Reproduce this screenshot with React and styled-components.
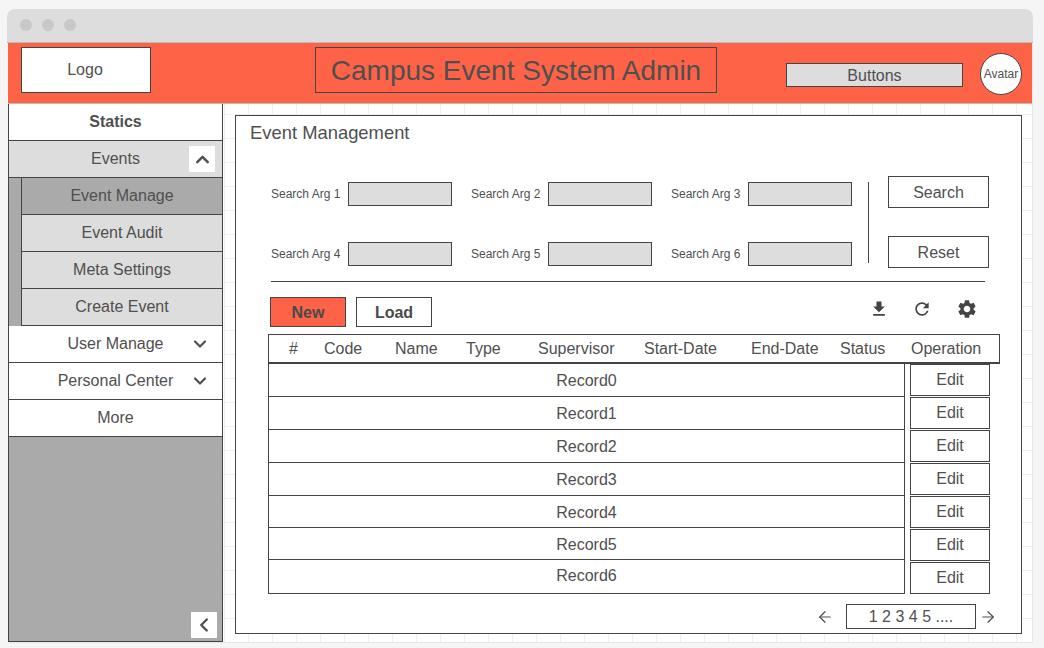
import React from 'react';
import styled, { createGlobalStyle } from 'styled-components';
import { ChevronUp, ChevronDown, ChevronLeft, ArrowLeft, ArrowRight } from 'lucide-react';
import { MdFileDownload, MdRefresh, MdSettings } from 'react-icons/md';

const Global = createGlobalStyle`
  html, body { margin: 0; padding: 0; background: #f5f5f5; }
  body { font-family: "Liberation Sans", Arial, sans-serif; color: #4f4f4f; }
  * { box-sizing: border-box; }
`;
const Page = styled.div`
  width: 1044px; height: 648px; padding: 9px 11px 5px 7px; overflow: hidden;
`;
const Win = styled.div`
  width: 1026px; height: 634px; display: flex; flex-direction: column;
  border-radius: 8px 8px 0 0; overflow: hidden; background: #f5f5f5;
`;
const TitleBar = styled.div`
  height: 34px; flex: none; background: #ddd; display: flex; align-items: center;
  gap: 10px; padding: 0 0 2px 13px; border-bottom: 1px solid #bbb;
`;
const Dot = styled.span`
  width: 12px; height: 12px; border-radius: 50%; background: #c8c8c8;
`;
const Canvas = styled.div`
  flex: 1; display: flex; flex-direction: column; margin: 0 0 0 1px; min-height: 0;
  background-color: #fff;
  background-image: linear-gradient(#eee 1px, transparent 1px), linear-gradient(90deg, #eee 1px, transparent 1px);
  background-size: 24px 24px;
  background-position: 0 -1px;
  border-right: 1px solid #e6e6e6;
  border-bottom: 1px solid #e6e6e6;
`;
const Header = styled.header`
  height: 61px; flex: none; background: #ff6347; border-bottom: 1px solid #bbb;
  display: flex; align-items: flex-start; padding-left: 13px; width: 1024px;
`;
const Logo = styled.div`
  width: 130px; height: 46px; margin-top: 4px; background: #fff; border: 1px solid #444;
  display: flex; align-items: center; justify-content: center; font-size: 16px; padding-right: 2px;
`;
const AppTitle = styled.h1`
  width: 402px; height: 46px; margin: 4px 0 0 164px; border: 1px solid #444; font-weight: 400;
  font-size: 28px; display: flex; align-items: center; justify-content: center; color: #4f4f4f; padding-top: 2px;
`;
const HeaderButtons = styled.div`
  width: 177px; height: 24px; margin: 20px 0 0 69px; background: #ddd; border: 1px solid #444;
  display: flex; align-items: center; justify-content: center; font-size: 16px; padding-top: 1px;
`;
const Avatar = styled.div`
  width: 42px; height: 42px; margin: 10px 0 0 17px; border-radius: 50%; background: #fff; border: 1px solid #444;
  display: flex; align-items: center; justify-content: center; font-size: 12px;
`;
const Body = styled.div`
  flex: 1; display: flex; min-height: 0;
`;
const Side = styled.aside`
  width: 215px; flex: none; background: #aaa; border: 1px solid #444; border-top: 0;
  display: flex; flex-direction: column; position: relative;
`;
const NavRow = styled.div`
  height: 37px; flex: none; position: relative; display: flex; align-items: center; justify-content: center;
  font-size: 16px; border-bottom: 1px solid #444;
  background: ${p => (p.$shade ? '#ddd' : '#fff')};
  font-weight: ${p => (p.$bold ? 700 : 400)};
`;
const ToggleBox = styled.span`
  position: absolute; right: 7px; top: 5px; width: 26px; height: 26px; background: #fff;
  display: flex; align-items: center; justify-content: center;
`;
const ChevronSlot = styled.span`
  position: absolute; right: 12px; top: 8px; display: flex;
`;
const SubNav = styled.div`
  padding-left: 12px; background: #aaa; display: flex; flex-direction: column;
`;
const SubRow = styled.div`
  height: 37px; display: flex; align-items: center; justify-content: center; font-size: 16px;
  border-left: 1px solid #444; border-bottom: 1px solid #444;
  background: ${p => (p.$active ? '#aaa' : '#ddd')};
`;
const Collapse = styled.span`
  position: absolute; right: 5px; bottom: 3px; width: 26px; height: 26px; background: #fff;
  display: flex; align-items: center; justify-content: center;
`;
const Main = styled.main`
  flex: 1; padding: 11px 10px 7px 12px; min-width: 0;
`;
const Card = styled.section`
  width: 787px; height: 519px; background: #fff; border: 1px solid #444; padding: 7px 0 0 14px;
`;
const CardTitle = styled.h2`
  margin: 0; font-size: 18.4px; font-weight: 400; line-height: 20px; color: #4f4f4f;
`;
const SearchArea = styled.div`
  display: flex; margin: 33px 0 0 21px; height: 92px;
`;
const ArgGrid = styled.div`
  display: grid; grid-template-columns: repeat(3, 181px); grid-auto-rows: 24px; row-gap: 36px; margin-top: 6px;
  column-gap: 19px; width: 581px;
`;
const Arg = styled.label`
  display: flex; align-items: center; justify-content: space-between; font-size: 12px; white-space: nowrap;
`;
const ArgInput = styled.span`
  width: 104px; height: 24px; background: #ddd; border: 1px solid #444; display: block;
`;
const VDivider = styled.div`
  width: 1px; height: 81px; margin: 6px 0 0 16px; background: #444;
`;
const SearchButtons = styled.div`
  display: flex; flex-direction: column; gap: 28px; margin-left: 19px;
`;
const OutlineBtn = styled.button`
  width: 101px; height: 32px; background: #fff; border: 1px solid #444; color: #4f4f4f; font: 16px "Liberation Sans", Arial, sans-serif; padding: 2px 0 0;
`;
const HLine = styled.div`
  width: 714px; height: 1px; background: #444; margin: 13px 0 0 21px;
`;
const Toolbar = styled.div`
  display: flex; align-items: center; gap: 10px; margin: 15px 0 0 20px; height: 30px; width: 708px;
`;
const ActionBtn = styled.button`
  width: 76px; height: 30px; border: 1px solid #444; color: #4a4a4a; font: 700 16px "Liberation Sans", Arial, sans-serif; padding: 1px 0 0;
  background: ${p => (p.$primary ? '#ff6347' : '#fff')};
`;
const ToolIcons = styled.div`
  margin-left: auto; display: flex; align-items: center; gap: 23px; color: #444; margin-top: -6px;
  svg:last-child { margin-left: 1px; }
`;
const TableHead = styled.div`
  display: grid; grid-template-columns: 35px 71px 71px 72px 106px 107px 89px 71px 1fr;
  width: 732px; height: 30px; margin: 7px 0 0 18px; border: 1px solid #444; border-bottom: 2px solid #444;
  align-items: center; font-size: 16px; padding-left: 20px; white-space: nowrap;
`;
const TableBody = styled.div`
  display: flex; gap: 5px; margin-left: 18px;
`;
const Records = styled.div`
  width: 637px; height: 230px; border: 1px solid #444; border-top: 0;
`;
const Record = styled.div`
  height: ${p => p.$h}px; display: flex; align-items: center; justify-content: center; font-size: 16px;
  border-bottom: 1px solid #444; padding-top: 2px;
  &:last-child { border-bottom: 0; padding: 0 0 1px; }
`;
const Edits = styled.div`
  display: flex; flex-direction: column;
`;
const EditBtn = styled.button`
  width: 80px; height: 32px; margin-bottom: 1px; background: #fff; border: 1px solid #444; color: #4f4f4f; font: 16px "Liberation Sans", Arial, sans-serif; padding: 0;
`;
const Pager = styled.div`
  display: flex; align-items: center; justify-content: flex-end; margin-top: 9px; width: 747px; height: 25px;
`;
const PageBox = styled.div`
  width: 130px; height: 25px; margin: 0 3px 0 12px; border: 1px solid #444; font-size: 16px;
  display: flex; align-items: center; justify-content: center;
`;

const subItems = ['Event Audit', 'Meta Settings', 'Create Event'];
const cols = ['#', 'Code', 'Name', 'Type', 'Supervisor', 'Start-Date', 'End-Date', 'Status', 'Operation'];
const heights = [33, 33, 33, 33, 32, 32, 33];

export default function App() {
  return (
    <Page>
      <Global />
      <Win>
        <TitleBar><Dot /><Dot /><Dot /></TitleBar>
        <Canvas>
          <Header>
            <Logo>Logo</Logo>
            <AppTitle>Campus Event System Admin</AppTitle>
            <HeaderButtons>Buttons</HeaderButtons>
            <Avatar>Avatar</Avatar>
          </Header>
          <Body>
            <Side>
              <NavRow $bold>Statics</NavRow>
              <NavRow $shade>Events<ToggleBox><ChevronUp size={21} strokeWidth={2.8} /></ToggleBox></NavRow>
              <SubNav>
                <SubRow $active>Event Manage</SubRow>
                {subItems.map(s => <SubRow key={s}>{s}</SubRow>)}
              </SubNav>
              <NavRow>User Manage<ChevronSlot><ChevronDown size={20} strokeWidth={2.6} /></ChevronSlot></NavRow>
              <NavRow>Personal Center<ChevronSlot><ChevronDown size={20} strokeWidth={2.6} /></ChevronSlot></NavRow>
              <NavRow>More</NavRow>
              <Collapse><ChevronLeft size={22} strokeWidth={2.6} /></Collapse>
            </Side>
            <Main>
              <Card>
                <CardTitle>Event Management</CardTitle>
                <SearchArea>
                  <ArgGrid>
                    {[1, 2, 3, 4, 5, 6].map(n => (
                      <Arg key={n}>Search Arg {n}<ArgInput /></Arg>
                    ))}
                  </ArgGrid>
                  <VDivider />
                  <SearchButtons>
                    <OutlineBtn>Search</OutlineBtn>
                    <OutlineBtn>Reset</OutlineBtn>
                  </SearchButtons>
                </SearchArea>
                <HLine />
                <Toolbar>
                  <ActionBtn $primary>New</ActionBtn>
                  <ActionBtn>Load</ActionBtn>
                  <ToolIcons>
                    <MdFileDownload size={20} />
                    <MdRefresh size={20} />
                    <MdSettings size={22} />
                  </ToolIcons>
                </Toolbar>
                <TableHead>{cols.map(c => <span key={c}>{c}</span>)}</TableHead>
                <TableBody>
                  <Records>
                    {heights.map((h, i) => <Record key={i} $h={h}>Record{i}</Record>)}
                  </Records>
                  <Edits>{heights.map((h, i) => <EditBtn key={i}>Edit</EditBtn>)}</Edits>
                </TableBody>
                <Pager>
                  <ArrowLeft size={18} strokeWidth={1.6} />
                  <PageBox>1 2 3 4 5 ....</PageBox>
                  <ArrowRight size={18} strokeWidth={1.6} />
                </Pager>
              </Card>
            </Main>
          </Body>
        </Canvas>
      </Win>
    </Page>
  );
}
